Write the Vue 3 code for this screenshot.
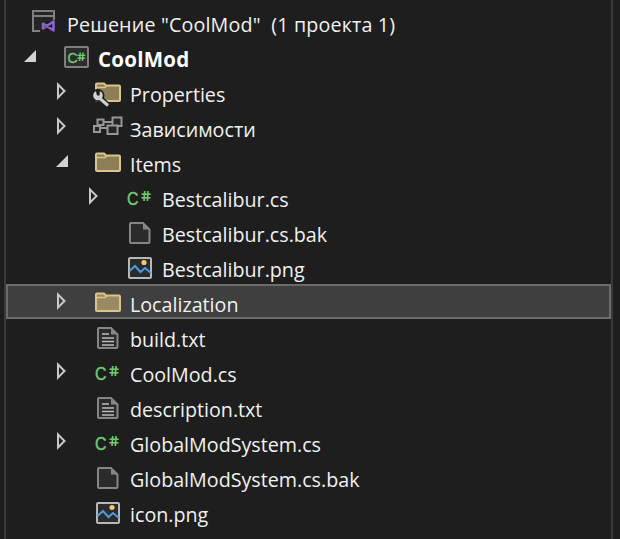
<script setup>
// d = tree depth, arrow = open | closed | none
const rows = [
  { d: -1, arrow: "none", icon: "solution", label: 'Решение "CoolMod"  (1 проекта 1)', wide: true },
  { d: 0, arrow: "open", icon: "project", label: "CoolMod", bold: true },
  { d: 1, arrow: "closed", icon: "props", label: "Properties" },
  { d: 1, arrow: "closed", icon: "deps", label: "Зависимости" },
  { d: 1, arrow: "open", icon: "folder", label: "Items" },
  { d: 2, arrow: "closed", icon: "cs", label: "Bestcalibur.cs" },
  { d: 2, arrow: "none", icon: "file", label: "Bestcalibur.cs.bak" },
  { d: 2, arrow: "none", icon: "image", label: "Bestcalibur.png" },
  { d: 1, arrow: "closed", icon: "folder", label: "Localization", selected: true },
  { d: 1, arrow: "none", icon: "text", label: "build.txt" },
  { d: 1, arrow: "closed", icon: "cs", label: "CoolMod.cs" },
  { d: 1, arrow: "none", icon: "text", label: "description.txt" },
  { d: 1, arrow: "closed", icon: "cs", label: "GlobalModSystem.cs" },
  { d: 1, arrow: "none", icon: "file", label: "GlobalModSystem.cs.bak" },
  { d: 1, arrow: "none", icon: "image", label: "icon.png" },
];
</script>

<template>
  <div class="page">
    <div class="tree">
      <div
        v-for="row in rows"
        :key="row.label"
        :class="{ row: true, selected: row.selected }"
      >
        <div class="slot" :style="{ width: 8 + 32 * (row.d + 1) + 'px' }">
          <svg v-if="row.arrow !== 'none'" class="arrow" width="36" height="35" viewBox="0 0 36 35">
            <path v-if="row.arrow === 'open'" d="M12 11V23H0Z" fill="#d2d2d2" />
            <path v-else d="M2 10.5 8.5 17 2 23.5Z" fill="none" stroke="#c8c8c8" stroke-width="2" />
          </svg>
        </div>

        <svg class="icon" width="32" height="35" viewBox="0 0 32 35">
          <g v-if="row.icon === 'solution'">
            <path d="M12 27H5V7H26V16" fill="#252525" stroke="#7f7f7f" stroke-width="2" />
            <path d="M5 12H26" stroke="#7f7f7f" stroke-width="2" />
            <path d="M13 17H29V28H13Z" fill="#1e1e1e" />
            <path d="M15 19.5 25.5 26.5V17.5L15 24.5Z" fill="none" stroke="#8a63c9" stroke-width="2.6" stroke-linejoin="round" />
          </g>
          <g v-else-if="row.icon === 'project'">
            <rect x="5" y="8" width="23" height="20" rx="1" fill="#2b2b2b" stroke="#7f7f7f" stroke-width="2" />
            <text x="7.5" y="23.5" class="cs-c small">C</text>
            <text transform="translate(17 21.5) skewX(10)" class="cs-h small">#</text>
          </g>
          <g v-else-if="row.icon === 'cs'">
            <text x="3" y="25.5" class="cs-c" textLength="11.5" lengthAdjust="spacingAndGlyphs">C</text>
            <text transform="translate(17 22) skewX(10)" class="cs-h">#</text>
          </g>
          <g v-else-if="row.icon === 'folder' || row.icon === 'props'">
            <path d="M4 10.5a1 1 0 0 1 1-1H12L14 11.5H27a1 1 0 0 1 1 1V26a1 1 0 0 1-1 1H5a1 1 0 0 1-1-1Z" fill="#c8b27a" fill-opacity="0.65" stroke="#dcc58b" stroke-width="2" />
            <path d="M4 13.5H13L15 11.5" fill="none" stroke="#dcc58b" stroke-width="1.5" />
            <g v-if="row.icon === 'props'">
              <circle cx="6" cy="21.5" r="6.5" fill="#1e1e1e" />
              <path d="M8.5 25 16 31.5" stroke="#1e1e1e" stroke-width="6" />
              <circle cx="6" cy="21.5" r="4.8" fill="#d0d0d0" />
              <path d="M8.5 25 16 31.5" stroke="#d0d0d0" stroke-width="3" />
              <path d="M3.5 15.5H8L7.5 21.5H5Z" fill="#1e1e1e" />
            </g>
          </g>
          <g v-else-if="row.icon === 'deps'" fill="#252525" stroke="#969696" stroke-width="2">
            <path d="M12 13H20M8 19H16" fill="none" />
            <rect x="5.5" y="10.5" width="6" height="5.5" />
            <rect x="2" y="17" width="6" height="6" />
            <rect x="20.5" y="8.5" width="9" height="8.5" />
            <rect x="15.5" y="16.5" width="10" height="8.5" />
          </g>
          <g v-else-if="row.icon === 'file' || row.icon === 'text'">
            <path d="M6 9H19L25.5 15.5V28a1 1 0 0 1-1 1H7a1 1 0 0 1-1-1V10a1 1 0 0 1 1-1Z" fill="#2b2b2b" stroke="#858585" stroke-width="2" />
            <path d="M19 9V15.5H25.5Z" fill="#858585" />
            <path v-if="row.icon === 'text'" d="M10 15H17M10 19H22M10 22.5H22M10 26H22" fill="none" stroke="#bcbcbc" stroke-width="1.6" />
          </g>
          <g v-else-if="row.icon === 'image'">
            <rect x="5" y="9" width="22" height="20" rx="1" fill="#2b2b2b" stroke="#b8b8b8" stroke-width="2" />
            <circle cx="20" cy="13.5" r="2.6" fill="#f2c879" />
            <path d="M5.5 22 11 17 16.5 23 21 19 27 24" fill="none" stroke="#4a9be0" stroke-width="2" />
          </g>
        </svg>

        <span :class="{ label: true, bold: row.bold, wide: row.wide }">{{ row.label }}</span>
      </div>
    </div>
  </div>
</template>

<style scoped>
.page {
  width: 620px;
  height: 539px;
  box-sizing: border-box;
  padding-left: 4px;
  overflow: hidden;
  background: #1e1e1e;
}

.tree {
  width: 609px;
  height: 539px;
  box-sizing: border-box;
  padding-top: 4px;
  border-left: 2px solid #3a3a3a;
  border-right: 2px solid #3a3a3a;
}

.row {
  display: flex;
  align-items: stretch;
  height: 35px;
  padding-left: 14px;
  box-sizing: border-box;
}

.selected {
  background: #3f3f3f;
  box-shadow: inset 0 0 0 2px #6b6b6b;
}

.slot {
  display: flex;
  justify-content: flex-end;
  flex: none;
}

.arrow {
  flex: none;
}

.icon {
  flex: none;
  margin-right: 6px;
}

.label {
  font-family: "Open Sans", sans-serif;
  font-size: 19.7px;
  line-height: 35px;
  padding-top: 3px;
  color: #f1f1f1;
  white-space: pre;
}

.wide {
  margin-left: 1px;
  letter-spacing: 0.16px;
}

.bold {
  font-size: 20.5px;
  font-weight: 700;
  letter-spacing: 0.25px;
  color: #ffffff;
}

.cs-c {
  font-family: "Liberation Sans", sans-serif;
  font-size: 18px;
  fill: #6fcb6f;
  stroke: #6fcb6f;
  stroke-width: 0.4px;
}

.cs-h {
  font-family: "DejaVu Sans", sans-serif;
  font-size: 14px;
  font-weight: 700;
  fill: #6fcb6f;
}

.cs-c.small {
  font-size: 14px;
}

.cs-h.small {
  font-size: 12px;
}
</style>
